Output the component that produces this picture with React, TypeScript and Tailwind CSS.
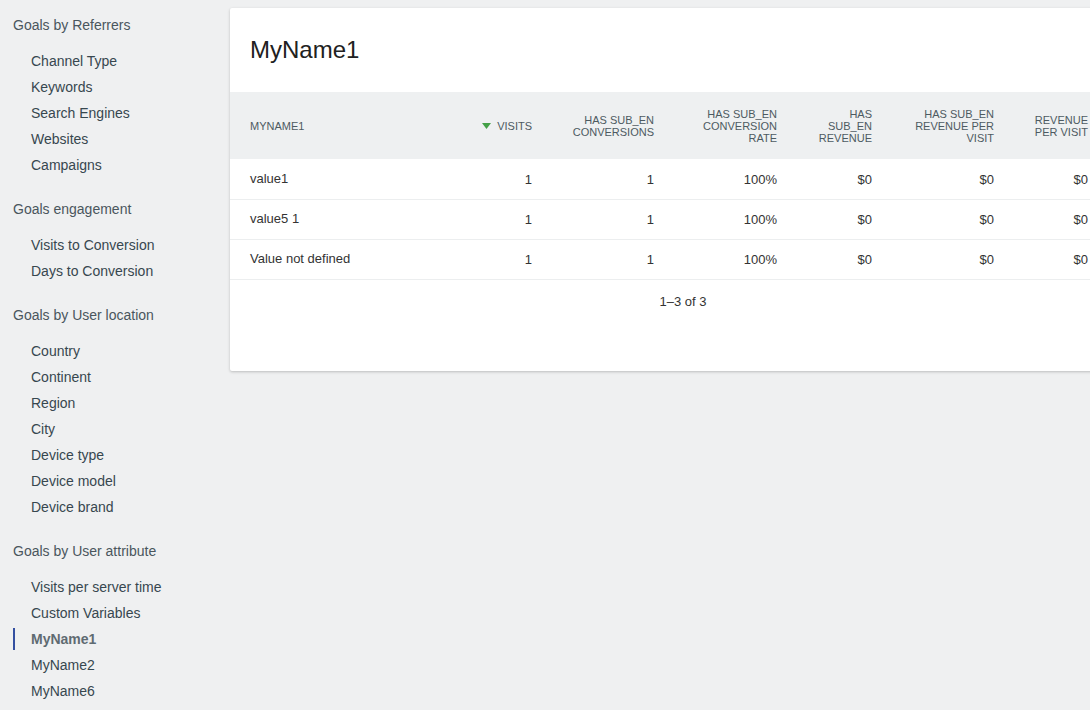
import React from 'react'

type Section = { title: string; items: string[] }

const sections: Section[] = [
  {
    title: 'Goals by Referrers',
    items: ['Channel Type', 'Keywords', 'Search Engines', 'Websites', 'Campaigns'],
  },
  { title: 'Goals engagement', items: ['Visits to Conversion', 'Days to Conversion'] },
  {
    title: 'Goals by User location',
    items: ['Country', 'Continent', 'Region', 'City', 'Device type', 'Device model', 'Device brand'],
  },
  {
    title: 'Goals by User attribute',
    items: ['Visits per server time', 'Custom Variables', 'MyName1', 'MyName2', 'MyName6'],
  },
]

const active = 'MyName1'

const rows = [
  { label: 'value1', visits: '1', conv: '1', rate: '100%', rev: '$0', rpv: '$0', last: '$0' },
  { label: 'value5 1', visits: '1', conv: '1', rate: '100%', rev: '$0', rpv: '$0', last: '$0' },
  { label: 'Value not defined', visits: '1', conv: '1', rate: '100%', rev: '$0', rpv: '$0', last: '$0' },
]

function Sidebar() {
  return (
    <nav className="w-[230px] shrink-0 pt-[12px] flex flex-col gap-[18px]">
      {sections.map((s) => (
        <div key={s.title}>
          <div className="h-[26px] leading-[26px] pl-[13px] text-[14px] text-[#4a565d]">{s.title}</div>
          <ul className="mt-[10px]">
            {s.items.map((item) => {
              const on = item === active
              return (
                <li key={item} className="relative h-[26px] leading-[26px] pl-[31px] text-[14px]">
                  {on && <span className="absolute left-[13px] top-[2px] h-[22px] w-[2px] bg-[#3450a1]" />}
                  <span className={on ? 'font-bold text-[#5f6b72]' : 'text-[#37474f]'}>{item}</span>
                </li>
              )
            })}
          </ul>
        </div>
      ))}
    </nav>
  )
}

function SortArrow() {
  return (
    <svg width="9" height="6" viewBox="0 0 9 6" className="inline-block mr-[6px] mb-[2px]">
      <path d="M0 0h9L4.5 6z" fill="#43a047" />
    </svg>
  )
}

export default function App() {
  const th = 'align-middle text-right font-normal text-[11px] leading-[12px] text-[#4d5a61] uppercase pl-[32px]'
  const td = 'text-right align-middle pt-[2px]'
  return (
    <div
      className="min-h-[710px] w-full overflow-hidden bg-[#eff0f1] flex"
      style={{ fontFamily: '"Liberation Sans", Arial, sans-serif' }}
    >
      <Sidebar />
      <main className="pt-[8px]">
        <div className="w-[906px] bg-white rounded-[2px] shadow-[0_1px_3px_rgba(0,0,0,0.22)]">
          <div className="h-[84px] flex items-center px-5">
            <h2 className="text-[24px] leading-[28px] text-[#212121]">MyName1</h2>
          </div>
          <table className="w-[906px] table-fixed border-collapse text-[13px] text-[#333]">
            <colgroup>
              <col className="w-[202px]" />
              <col className="w-[100px]" />
              <col className="w-[122px]" />
              <col className="w-[123px]" />
              <col className="w-[95px]" />
              <col className="w-[122px]" />
              <col className="w-[94px]" />
              <col className="w-[48px]" />
            </colgroup>
            <thead>
              <tr className="h-[67px] bg-[#eef0f1]">
                <th className="align-middle text-left font-normal text-[11px] leading-[12px] text-[#4d5a61] uppercase pl-5">
                  MyName1
                </th>
                <th className={th}>
                  <span className="whitespace-nowrap">
                    <SortArrow />
                    Visits
                  </span>
                </th>
                <th className={th}>Has sub_en Conversions</th>
                <th className={th}>Has sub_en Conversion Rate</th>
                <th className={th}>Has sub_en Revenue</th>
                <th className={th}>Has sub_en Revenue per Visit</th>
                <th className={th}>Revenue per Visit</th>
                <th />
              </tr>
            </thead>
            <tbody>
              {rows.map((r) => (
                <tr key={r.label} className="h-[40px] border-b border-[#eceeef]">
                  <td className="pl-5 align-middle">{r.label}</td>
                  <td className={td}>{r.visits}</td>
                  <td className={td}>{r.conv}</td>
                  <td className={td}>{r.rate}</td>
                  <td className={td}>{r.rev}</td>
                  <td className={td}>{r.rpv}</td>
                  <td className={td}>{r.last}</td>
                  <td />
                </tr>
              ))}
            </tbody>
          </table>
          <div className="h-[91px] pt-[14px] text-center text-[13px] leading-[16px] text-[#333]">1–3 of 3</div>
        </div>
      </main>
    </div>
  )
}
